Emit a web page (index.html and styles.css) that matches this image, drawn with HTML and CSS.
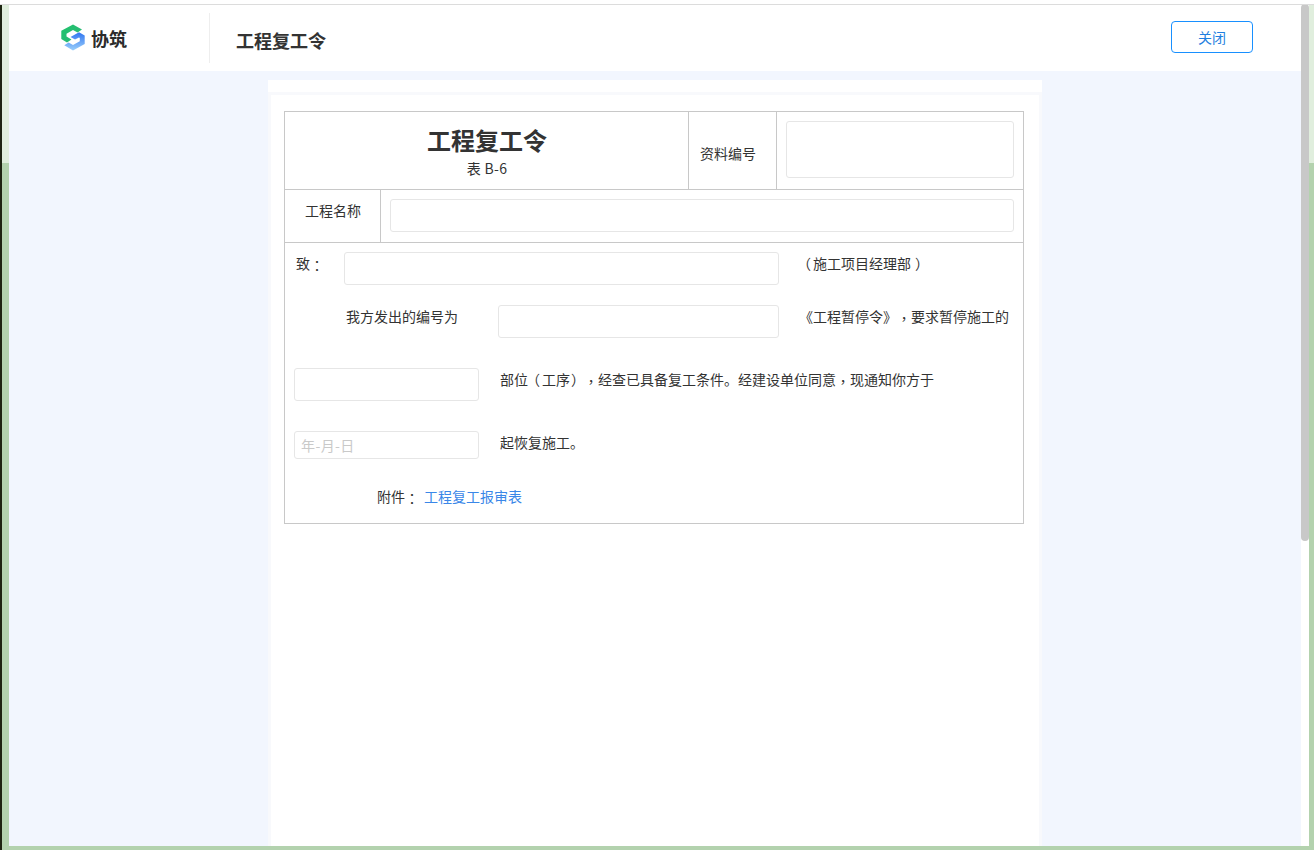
FILE: index.html
```html
<!DOCTYPE html>
<html lang="zh-CN">
<head>
<meta charset="utf-8">
<title>工程复工令</title>
<link rel="stylesheet" href="styles.css">
</head>
<body>
<div class="desktop">
  <div class="win">
    <header class="head">
      <div class="brand">
        <svg class="logo" width="24" height="27" viewBox="0 0 24 27" fill="none">
          <defs>
            <linearGradient id="g1" x1="0" y1="0" x2="1" y2="1"><stop offset="0" stop-color="#1fc46a"/><stop offset="1" stop-color="#2fb57c"/></linearGradient>
            <linearGradient id="g2" x1="0" y1="0" x2="0" y2="1"><stop offset="0" stop-color="#2f74f0"/><stop offset="1" stop-color="#9cd0fb"/></linearGradient>
          </defs>
          <path d="M12 0.5 L21 5.5 L16.5 8.5 L12 6 L5.5 9.8 L5.5 12.5 L10.5 15.5 L6 18.5 L0.3 15 L0.3 6.8 Z" fill="url(#g1)"/>
          <path d="M12 26.5 L23.7 20 L23.7 11.5 L18 8.3 L9.5 13 L14 15.5 L18 13.4 L18.8 14 L18.8 17.3 L12 21 L7.6 18.6 L3.3 21.2 Z" fill="url(#g2)"/>
        </svg>
        <span class="brand-name">协筑</span>
      </div>
      <h1 class="head-title">工程复工令</h1>
      <button class="close" type="button">关闭</button>
    </header>
    <main class="body">
      <div class="sheet">
        <div class="paper">
          <div class="table">
            <div class="row row-title">
              <div class="cell-title">
                <div class="title">工程复工令</div>
                <div class="subtitle">表 B-6</div>
              </div>
              <div class="cell-code">资料编号</div>
              <div class="cell-code-input"><div class="input input-code"></div></div>
            </div>
            <div class="row row-name">
              <div class="cell-name">工程名称</div>
              <div class="cell-name-input"><div class="input input-name"></div></div>
            </div>
            <div class="letter">
              <div class="line line-1">
                <span class="txt to">致<span class="pc" lang="zh-Hant">：</span></span>
                <div class="input w-435"></div>
                <span class="txt after"><span class="p po">（</span>施工项目经理部<span class="p pe">）</span></span>
              </div>
              <div class="line line-2">
                <span class="txt intro">我方发出的编号为</span>
                <div class="input w-281"></div>
                <span class="txt after">《工程暂停令》<span class="pc" lang="zh-Hant">，</span>要求暂停施工的</span>
              </div>
              <div class="line line-3">
                <div class="input w-185"></div>
                <span class="txt after-s">部位<span class="p po">（</span>工序<span class="p pe pe-tight">）</span><span class="pc" lang="zh-Hant">，</span>经查已具备复工条件。经建设单位同意<span class="pc" lang="zh-Hant">，</span>现通知你方于</span>
              </div>
              <div class="line line-3">
                <div class="input w-185 date">年-月-日</div>
                <span class="txt after-s">起恢复施工。</span>
              </div>
              <div class="line line-4">
                <span class="txt attach">附件<span class="pc" lang="zh-Hant">：</span></span>
                <a class="txt link" href="#">工程复工报审表</a>
              </div>
            </div>
          </div>
        </div>
      </div>
    </main>
  </div>
  <div class="scroll"><div class="thumb"></div></div>
</div>
</body>
</html>
```
FILE: styles.css
```css
* { box-sizing: border-box; }
html, body { margin: 0; height: 100%; overflow: hidden; }
body {
  font-family: "Noto Sans CJK SC", "Noto Sans", sans-serif;
  font-size: 14px;
  color: #333;
  text-spacing-trim: space-all;
}
.desktop {
  width: 1314px;
  height: 850px;
  display: flex;
  padding: 4px 5px 4px 9px;
  background: linear-gradient(to bottom, #e0eedd 0, #e0eedd 163px, #b3d2ae 163px, #b3d2ae 100%);
  position: relative;
}
.desktop::before {
  content: "";
  position: absolute;
  left: 0; top: 0; bottom: 0;
  width: 2px;
  background: #1e2412;
}
.desktop::after {
  content: "";
  position: absolute;
  left: 0; right: 0; top: 0;
  height: 4px;
  background: #fff;
  border-bottom: 1px solid #dcdcdc;
}
.win {
  width: 1292px;
  display: flex;
  flex-direction: column;
  background: #f2f6fe;
}
.head {
  height: 67px;
  flex: none;
  background: #fff;
  display: flex;
  align-items: center;
}
.brand {
  width: 201px;
  height: 50px;
  padding-left: 52px;
  border-right: 1px solid #eee;
  display: flex;
  align-items: center;
}
.logo { flex: none; }
.brand-name {
  margin-left: 6px;
  font-size: 18px;
  font-weight: 700;
  color: #2b2b2b;
  line-height: 26px;
}
.head-title {
  margin: 4px 0 0 26px;
  font-size: 18px;
  font-weight: 700;
  color: #333;
  line-height: 26px;
  flex: 1;
}
.close {
  width: 82px;
  height: 32px;
  margin: 0 48px 2px 0;
  border: 1px solid #1890ff;
  border-radius: 4px;
  background: #fff;
  color: #1f7fe0;
  font: inherit;
  font-size: 14px;
  padding: 0;
}
.body {
  flex: 1;
  min-height: 0;
  padding: 9px 259px 0;
  overflow: hidden;
}
.sheet {
  width: 774px;
  height: 100%;
  background: #fff;
  padding: 15px 3px 0;
}
.paper {
  height: 100%;
  background: #fff;
  box-shadow: 0 0 0 3px #f8f9fc;
  padding: 16px 13px 0;
}
.table {
  width: 740px;
  height: 413px;
  border: 1px solid #c8c8c8;
}
.row {
  display: flex;
  border-bottom: 1px solid #c8c8c8;
}
.row-title { height: 78px; }
.row-name { height: 53px; }
.cell-title {
  width: 404px;
  border-right: 1px solid #c8c8c8;
  text-align: center;
  padding: 10px 0 0 1px;
}
.title {
  font-size: 24px;
  font-weight: 700;
  line-height: 36px;
  color: #333;
}
.subtitle {
  font-size: 14px;
  line-height: 20px;
  letter-spacing: .3px;
}
.cell-code {
  width: 88px;
  border-right: 1px solid #c8c8c8;
  padding: 31px 0 0 11px;
  line-height: 20px;
}
.cell-code-input {
  flex: 1;
  padding: 9px;
}
.input {
  border: 1px solid #e6e6e6;
  border-radius: 3px;
  background: #fff;
  flex: none;
}
.input-code { height: 57px; }
.cell-name {
  width: 96px;
  border-right: 1px solid #c8c8c8;
  padding: 10px 0 0 20px;
  line-height: 20px;
}
.cell-name-input {
  flex: 1;
  padding: 9px;
}
.input-name { height: 33px; }
.letter { padding: 9px 0 0 9px; }
.line { display: flex; align-items: flex-start; }
.line-2 { margin-top: 20px; }
.line-3 { margin-top: 30px; }
.line-4 { margin-top: 26px; }
.txt { line-height: 22px; flex: none; white-space: nowrap; }
.to { width: 50px; padding-left: 2px; }
.intro { width: 204px; padding-left: 52px; }
.w-435 { width: 435px; height: 33px; }
.w-281 { width: 281px; height: 33px; }
.w-185 { width: 185px; height: 33px; }
.date {
  height: 28px;
  padding-left: 6px;
  line-height: 26px;
  color: #c9c9c9;
  letter-spacing: .4px;
}
.after { margin-left: 20px; }
.after-s { margin-left: 21px; }
.attach { margin-left: 83px; width: 47px; }
.p { display: inline-block; width: 14px; white-space: nowrap; }
.po { text-indent: -2px; }
.pe { text-indent: 4px; }
.pe-tight { text-indent: 1px; }
.pc { font-family: "Noto Sans CJK TC", "Noto Sans CJK SC", sans-serif; vertical-align: -2px; }
.link { color: #3a87e8; text-decoration: none; }
.scroll {
  width: 8px;
  background: #fff;
  flex: none;
}
.thumb {
  height: 537px;
  background: #c8c8c8;
  border-radius: 4px;
}
```
